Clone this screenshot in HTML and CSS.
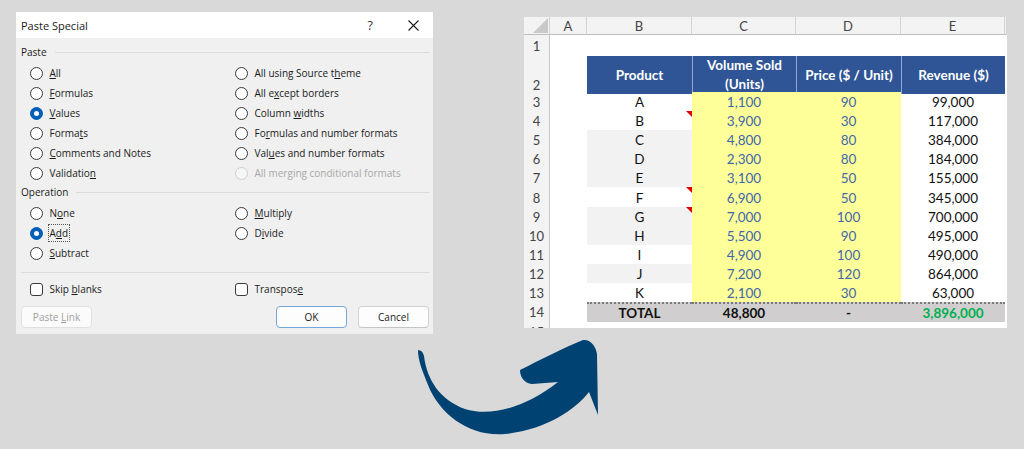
FILE: index.html
```html
<!DOCTYPE html>
<html>
<head>
<meta charset="utf-8">
<link rel="stylesheet" href="styles.css">
</head>
<body>
<div class="page">
  <div class="dialog">
    <div class="titlebar">
      <span class="title">Paste Special</span>
      <span class="help">?</span>
      <svg class="close" width="11" height="11" viewBox="0 0 11 11"><path d="M0.5 0.5L10.5 10.5M10.5 0.5L0.5 10.5" stroke="#1a1a1a" stroke-width="1.1"/></svg>
    </div>
    <div class="dbody">
      <div class="group"><span>Paste</span><i class="rule"></i></div>
      <div class="opts">
        <div class="opt"><span class="radio"></span><span><u>A</u>ll</span></div>
        <div class="opt"><span class="radio"></span><span>All using Source t<u>h</u>eme</span></div>
        <div class="opt"><span class="radio"></span><span><u>F</u>ormulas</span></div>
        <div class="opt"><span class="radio"></span><span>All e<u>x</u>cept borders</span></div>
        <div class="opt"><span class="radio on"></span><span><u>V</u>alues</span></div>
        <div class="opt"><span class="radio"></span><span>Column <u>w</u>idths</span></div>
        <div class="opt"><span class="radio"></span><span>Forma<u>t</u>s</span></div>
        <div class="opt"><span class="radio"></span><span>Fo<u>r</u>mulas and number formats</span></div>
        <div class="opt"><span class="radio"></span><span><u>C</u>omments and Notes</span></div>
        <div class="opt"><span class="radio"></span><span>Val<u>u</u>es and number formats</span></div>
        <div class="opt"><span class="radio"></span><span>Validatio<u>n</u></span></div>
        <div class="opt disabled"><span class="radio"></span><span>All mer<u>g</u>ing conditional formats</span></div>
      </div>
      <div class="group op"><span>Operation</span><i class="rule"></i></div>
      <div class="opts ops">
        <div class="opt"><span class="radio"></span><span>N<u>o</u>ne</span></div>
        <div class="opt"><span class="radio"></span><span><u>M</u>ultiply</span></div>
        <div class="opt"><span class="radio on"></span><span class="focus">A<u>d</u>d</span></div>
        <div class="opt"><span class="radio"></span><span>D<u>i</u>vide</span></div>
        <div class="opt"><span class="radio"></span><span><u>S</u>ubtract</span></div>
      </div>
      <i class="sep"></i>
      <div class="opts checks">
        <div class="opt"><span class="check"></span><span>Skip <u>b</u>lanks</span></div>
        <div class="opt"><span class="check"></span><span>Transpos<u>e</u></span></div>
      </div>
      <div class="buttons">
        <span class="btn disabled"><span>Paste <u>L</u>ink</span></span>
        <span class="spacer"></span>
        <span class="btn default"><span>OK</span></span>
        <span class="btn"><span>Cancel</span></span>
      </div>
    </div>
  </div>

  <div class="sheet">
    <div class="row colhdr">
      <div class="corner"><svg width="15" height="15" viewBox="0 0 15 15"><path d="M15 0L15 15L0 15Z" fill="#c9c9c9"/></svg></div>
      <div>A</div><div>B</div><div>C</div><div>D</div><div>E</div><div></div>
    </div>
    <div class="row r1"><div class="rh">1</div><div></div><div></div><div></div><div></div><div></div><div></div></div>
    <div class="row r2"><div class="rh">2</div><div></div><div class="th">Product</div><div class="th">Volume Sold<br>(Units)</div><div class="th">Price ($ / Unit)</div><div class="th">Revenue ($)</div><div></div></div>
    <div class="row dr"><div class="rh">3</div><div></div><div class="b">A</div><div class="c">1,100</div><div class="c">90</div><div class="e">99,000</div><div></div></div>
    <div class="row dr"><div class="rh">4</div><div></div><div class="b note">B</div><div class="c">3,900</div><div class="c">30</div><div class="e">117,000</div><div></div></div>
    <div class="row dr"><div class="rh">5</div><div></div><div class="b z">C</div><div class="c">4,800</div><div class="c">80</div><div class="e">384,000</div><div></div></div>
    <div class="row dr"><div class="rh">6</div><div></div><div class="b z">D</div><div class="c">2,300</div><div class="c">80</div><div class="e">184,000</div><div></div></div>
    <div class="row dr"><div class="rh">7</div><div></div><div class="b z">E</div><div class="c">3,100</div><div class="c">50</div><div class="e">155,000</div><div></div></div>
    <div class="row dr"><div class="rh">8</div><div></div><div class="b note">F</div><div class="c">6,900</div><div class="c">50</div><div class="e">345,000</div><div></div></div>
    <div class="row dr"><div class="rh">9</div><div></div><div class="b z note">G</div><div class="c">7,000</div><div class="c">100</div><div class="e">700,000</div><div></div></div>
    <div class="row dr"><div class="rh">10</div><div></div><div class="b z">H</div><div class="c">5,500</div><div class="c">90</div><div class="e">495,000</div><div></div></div>
    <div class="row dr"><div class="rh">11</div><div></div><div class="b">I</div><div class="c">4,900</div><div class="c">100</div><div class="e">490,000</div><div></div></div>
    <div class="row dr"><div class="rh">12</div><div></div><div class="b z">J</div><div class="c">7,200</div><div class="c">120</div><div class="e">864,000</div><div></div></div>
    <div class="row dr"><div class="rh">13</div><div></div><div class="b">K</div><div class="c">2,100</div><div class="c">30</div><div class="e">63,000</div><div></div></div>
    <div class="row tot"><div class="rh">14</div><div></div><div class="t">TOTAL</div><div class="t">48,800</div><div class="t">-</div><div class="t green">3,896,000</div><div></div></div>
    <div class="row r15"><div class="rh">15</div><div></div><div></div><div></div><div></div><div></div><div></div></div>
  </div>

  <svg class="arrow" width="230" height="125" viewBox="0 0 230 125">
    <path d="M23 30 C26 30 28 32 29 36 C32 60 45 80 70 89 C95 97 130 88 163 62 L137 64 C129 63 125 57 125 50 C145 40 170 27 188 20 C196 19 201 27 202 34 L203 95 L194 72 C180 90 150 110 110 114 C75 117 45 95 33 65 C27 50 23 40 23 30 Z" fill="#004272"/>
  </svg>
</div>
</body>
</html>
```

FILE: styles.css
```css
* { box-sizing: border-box; }
html, body { margin: 0; padding: 0; }
body {
  background: #d9d9d9;
  width: 1024px;
  height: 449px;
  overflow: hidden;
}
.page {
  position: relative;
  display: flex;
  align-items: flex-start;
  height: 449px;
}

/* ---------- dialog ---------- */
.dialog {
  margin: 12px 0 0 16px;
  width: 417px;
  height: 322px;
  background: #f0f0f0;
  font-family: "Open Sans", "Noto Sans", sans-serif;
  font-size: 10px;
  color: #1a1a1a;
  flex: none;
}
.titlebar {
  height: 26px;
  background: #fff;
  display: flex;
  align-items: center;
  padding: 0 14px 0 5px;
}
.title { font-size: 11px; flex: 1; }
.help { font-size: 12.5px; color: #333; margin-right: 35px; }
.close { display: block; }

.dbody { padding: 0 3px 0 5px; }
.group {
  display: flex;
  align-items: center;
  height: 14px;
  margin-top: 7px;
}
.group.op { margin-top: 2px; }
.rule {
  flex: 1;
  height: 1px;
  background: #dcdcdc;
  margin-left: 8px;
}
.opts {
  display: grid;
  grid-template-columns: 205px 1fr;
  grid-auto-rows: 20px;
  margin: 4px 0 0 8.5px;
}
.opt {
  display: flex;
  align-items: center;
}
.radio {
  width: 13px;
  height: 13px;
  border-radius: 50%;
  border: 1px solid #3a3a3a;
  background: #fff;
  margin-right: 7px;
  position: relative;
  flex: none;
}
.radio.on {
  background: #005fb8;
  border-color: #005fb8;
}
.radio.on::after {
  content: "";
  position: absolute;
  left: 3px;
  top: 3px;
  width: 5px;
  height: 5px;
  border-radius: 50%;
  background: #fff;
}
.opt.disabled { color: #a8a8a8; }
.opt.disabled .radio { border-color: #cfcfcf; background: #f7f7f7; }
.focus {
  outline: 1px dotted #555;
  outline-offset: 1px;
}
.sep {
  display: block;
  height: 1px;
  background: #dcdcdc;
  margin: 9px 0 0 0;
}
.checks { margin-top: 6px; }
.check {
  width: 13px;
  height: 13px;
  border-radius: 3px;
  border: 1px solid #3a3a3a;
  background: #fff;
  margin-right: 7px;
  flex: none;
}
.buttons {
  display: flex;
  margin-top: 7px;
  padding-right: 1px;
}
.spacer { flex: 1; }
.btn {
  width: 71px;
  height: 22px;
  background: #fdfdfd;
  border: 1px solid #d3d3d3;
  border-bottom-color: #c4c4c4;
  border-radius: 4px;
  display: flex;
  align-items: center;
  justify-content: center;
}
.btn + .btn { margin-left: 11px; }
.btn.disabled { color: #a0a0a0; background: #fbfbfb; border-color: #e0e0e0; }
.btn.default { border-color: #78a6d8; }

/* ---------- sheet ---------- */
.sheet {
  margin: 17px 0 0 91px;
  width: 483px;
  height: 311px;
  background: #fff;
  overflow: hidden;
  flex: none;
  font-family: Lato, "Liberation Sans", sans-serif;
  font-size: 13.5px;
  color: #111;
}
.row {
  display: grid;
  grid-template-columns: 26px 37px 105px 104px 105px 104px 2px;
}
.row > div {
  display: flex;
  align-items: center;
  justify-content: center;
  position: relative;
}
.colhdr { height: 18px; }
.colhdr > div {
  background: #f3f3f3;
  border-right: 1px solid #d3d3d3;
  border-bottom: 1px solid #bdbdbd;
  color: #444;
  font-size: 13px;
}
.colhdr > .corner { align-items: flex-start; justify-content: flex-start; padding: 1px 0 0 9px; }
.corner svg { display: block; }
.rh {
  background: #f3f3f3;
  border-right: 1px solid #c8c8c8;
  color: #444;
  font-size: 13px;
}
.r1 { height: 21px; }
.r2 { height: 36px; }
.r2 > .rh { align-items: flex-end; padding-bottom: 1px; }
.th {
  background: #2f5597;
  color: #fff;
  font-weight: bold;
  text-align: center;
  line-height: 19px;
}
.th + .th { border-left: 1px solid #8fa8d6; }
.dr { height: 19.1px; }
.dr > div { align-items: flex-end; line-height: 17px; }
.b.z { background: #f2f2f2; }
.c { background: #ffff99; color: #4267a8; }
.note::after {
  content: "";
  position: absolute;
  top: 0;
  right: 0;
  border-top: 6px solid #e00000;
  border-left: 6px solid transparent;
}
.tot { height: 20px; }
.t {
  background: #d0cece;
  font-weight: bold;
  border-top: 2px dotted #7a7a7a;
}
.green { color: #00b050; }
.r15 { height: 20px; }
.r15 > .rh { align-items: flex-start; padding-top: 2px; }

/* ---------- arrow ---------- */
.arrow {
  position: absolute;
  left: 395px;
  top: 320px;
}
```
